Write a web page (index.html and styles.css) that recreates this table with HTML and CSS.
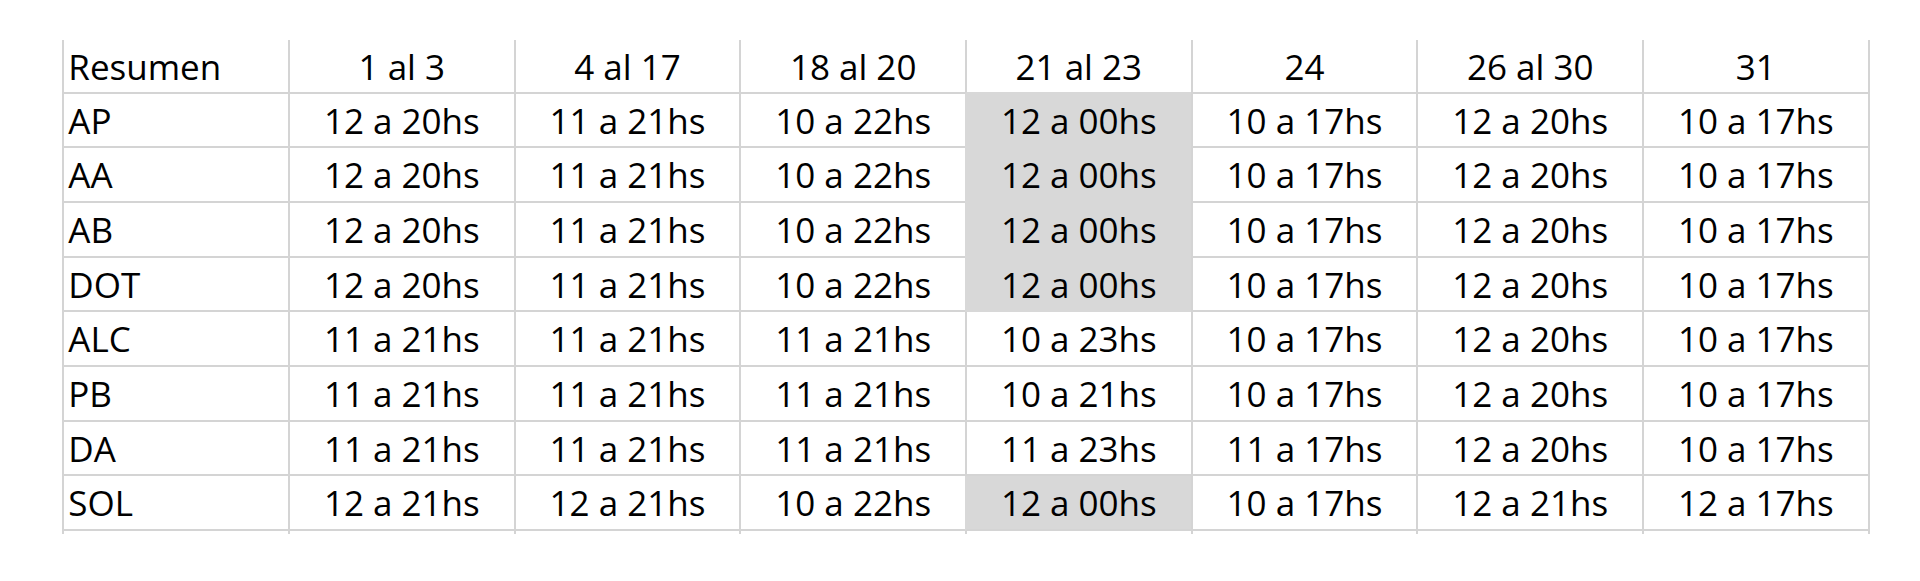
FILE: index.html
```html
<!DOCTYPE html>
<html lang="es">
<head>
<meta charset="utf-8">
<title>Resumen</title>
<link rel="stylesheet" href="styles.css">
</head>
<body>
<div class="sheet">
  <div class="cell head label">Resumen</div>
  <div class="cell head">1 al 3</div>
  <div class="cell head">4 al 17</div>
  <div class="cell head">18 al 20</div>
  <div class="cell head above-fill">21 al 23</div>
  <div class="cell head">24</div>
  <div class="cell head">26 al 30</div>
  <div class="cell head">31</div>

  <div class="cell label">AP</div>
  <div class="cell">12 a 20hs</div>
  <div class="cell">11 a 21hs</div>
  <div class="cell">10 a 22hs</div>
  <div class="cell fill">12 a 00hs</div>
  <div class="cell after-fill">10 a 17hs</div>
  <div class="cell">12 a 20hs</div>
  <div class="cell">10 a 17hs</div>

  <div class="cell label">AA</div>
  <div class="cell">12 a 20hs</div>
  <div class="cell">11 a 21hs</div>
  <div class="cell">10 a 22hs</div>
  <div class="cell fill">12 a 00hs</div>
  <div class="cell after-fill">10 a 17hs</div>
  <div class="cell">12 a 20hs</div>
  <div class="cell">10 a 17hs</div>

  <div class="cell label">AB</div>
  <div class="cell">12 a 20hs</div>
  <div class="cell">11 a 21hs</div>
  <div class="cell">10 a 22hs</div>
  <div class="cell fill">12 a 00hs</div>
  <div class="cell after-fill">10 a 17hs</div>
  <div class="cell">12 a 20hs</div>
  <div class="cell">10 a 17hs</div>

  <div class="cell label">DOT</div>
  <div class="cell">12 a 20hs</div>
  <div class="cell">11 a 21hs</div>
  <div class="cell">10 a 22hs</div>
  <div class="cell fill">12 a 00hs</div>
  <div class="cell after-fill">10 a 17hs</div>
  <div class="cell">12 a 20hs</div>
  <div class="cell">10 a 17hs</div>

  <div class="cell label">ALC</div>
  <div class="cell">11 a 21hs</div>
  <div class="cell">11 a 21hs</div>
  <div class="cell">11 a 21hs</div>
  <div class="cell">10 a 23hs</div>
  <div class="cell">10 a 17hs</div>
  <div class="cell">12 a 20hs</div>
  <div class="cell">10 a 17hs</div>

  <div class="cell label">PB</div>
  <div class="cell">11 a 21hs</div>
  <div class="cell">11 a 21hs</div>
  <div class="cell">11 a 21hs</div>
  <div class="cell">10 a 21hs</div>
  <div class="cell">10 a 17hs</div>
  <div class="cell">12 a 20hs</div>
  <div class="cell">10 a 17hs</div>

  <div class="cell label">DA</div>
  <div class="cell">11 a 21hs</div>
  <div class="cell">11 a 21hs</div>
  <div class="cell">11 a 21hs</div>
  <div class="cell">11 a 23hs</div>
  <div class="cell">11 a 17hs</div>
  <div class="cell">12 a 20hs</div>
  <div class="cell">10 a 17hs</div>

  <div class="cell label">SOL</div>
  <div class="cell">12 a 21hs</div>
  <div class="cell">12 a 21hs</div>
  <div class="cell">10 a 22hs</div>
  <div class="cell fill last-fill">12 a 00hs</div>
  <div class="cell after-fill">10 a 17hs</div>
  <div class="cell">12 a 21hs</div>
  <div class="cell">12 a 17hs</div>

  <div class="tail"></div>
  <div class="tail"></div>
  <div class="tail"></div>
  <div class="tail"></div>
  <div class="tail"></div>
  <div class="tail"></div>
  <div class="tail"></div>
  <div class="tail"></div>
</div>
</body>
</html>
```

FILE: styles.css
```css
html, body {
  margin: 0;
  padding: 0;
  background: #ffffff;
}

body {
  width: 1920px;
  height: 581px;
  overflow: hidden;
  font-family: "Open Sans", "Liberation Sans", sans-serif;
  color: #000000;
}

.sheet {
  display: grid;
  grid-template-columns: repeat(8, 225.675px);
  width: max-content;
  margin: 40px 0 0 62.3px;
  border-right: 2px solid #d4d4d4;
}

.cell {
  box-sizing: border-box;
  height: 54.66px;
  border-left: 2px solid #d4d4d4;
  border-bottom: 2px solid #d4d4d4;
  font-size: 35px;
  line-height: 53px;
  text-align: center;
  white-space: nowrap;
  overflow: hidden;
}

.cell.head {
  height: 53.7px;
}

.cell.label {
  text-align: left;
  padding-left: 4px;
}

.cell.above-fill {
  border-bottom-color: #d8d8d8;
}

.cell.fill {
  background: #d8d8d8;
  border-left-color: #d8d8d8;
  border-bottom-color: #d8d8d8;
}

.cell.fill.last-fill {
  border-bottom-color: #d4d4d4;
}

.tail {
  box-sizing: border-box;
  height: 3px;
  border-left: 2px solid #d4d4d4;
}
```
